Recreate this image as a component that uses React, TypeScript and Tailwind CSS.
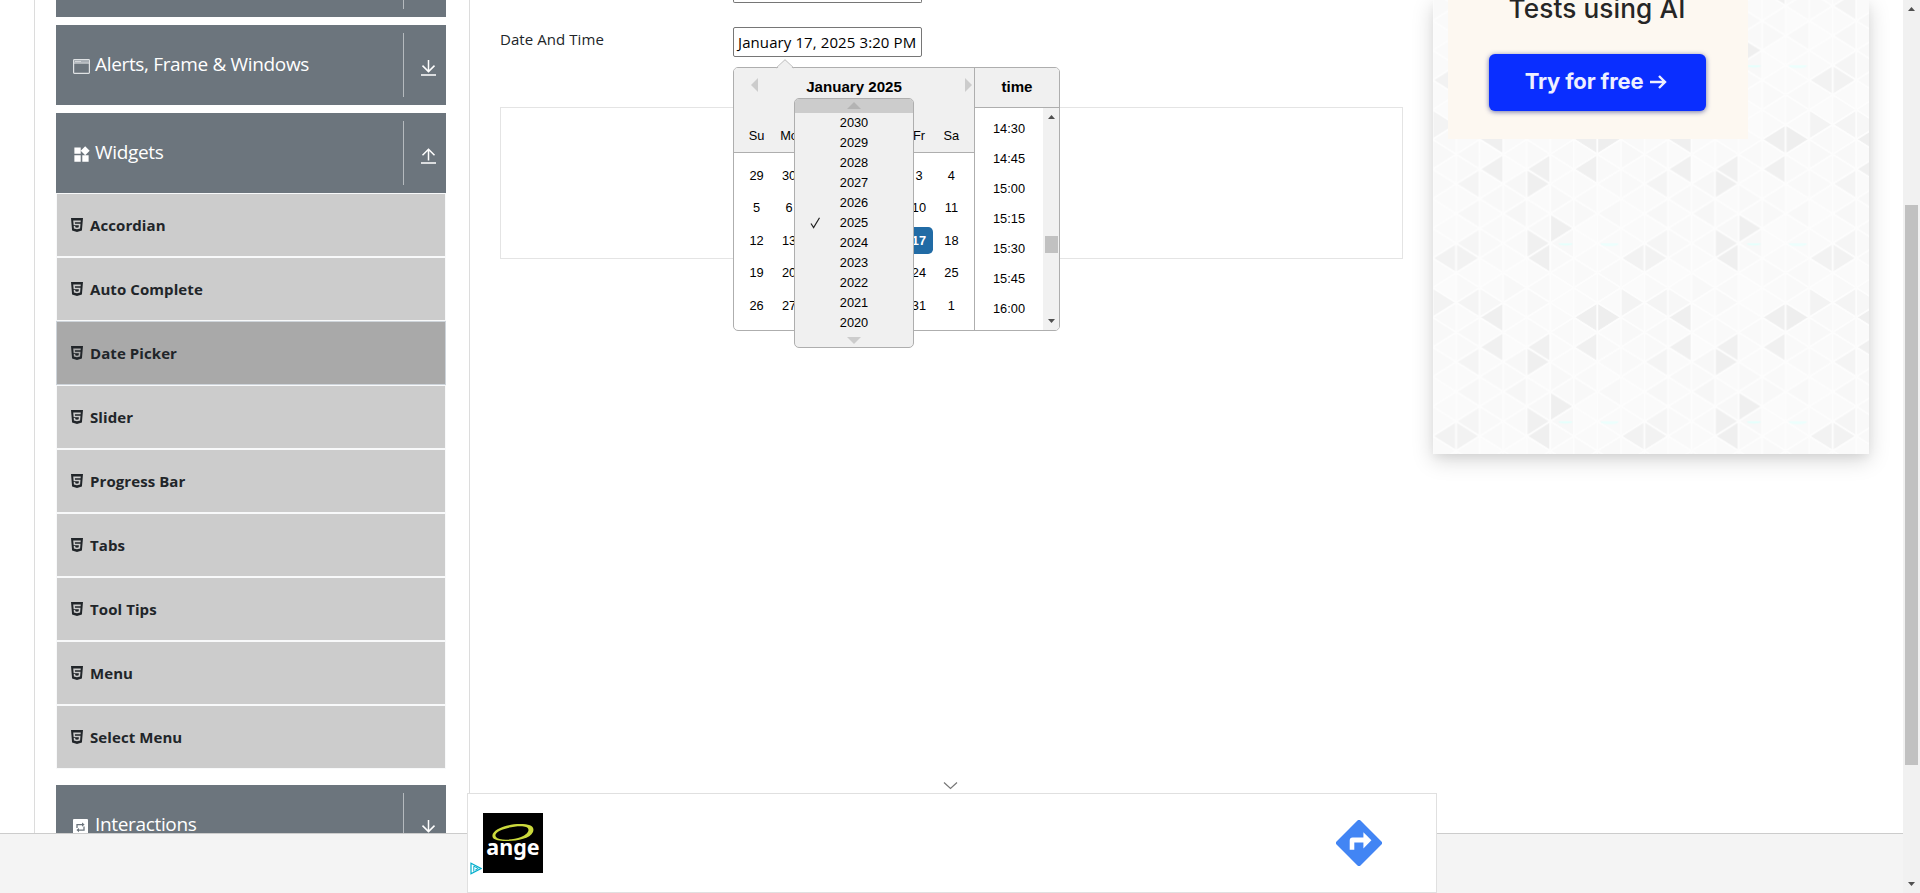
import React from "react";
import { MdWidgets } from "react-icons/md";
import { IoLogoHtml5 } from "react-icons/io5";

const menuItems = [
  "Accordian",
  "Auto Complete",
  "Date Picker",
  "Slider",
  "Progress Bar",
  "Tabs",
  "Tool Tips",
  "Menu",
  "Select Menu",
];

const dayNames = ["Su", "Mo", "Tu", "We", "Th", "Fr", "Sa"];
const weeks = [
  [29, 30, 31, 1, 2, 3, 4],
  [5, 6, 7, 8, 9, 10, 11],
  [12, 13, 14, 15, 16, 17, 18],
  [19, 20, 21, 22, 23, 24, 25],
  [26, 27, 28, 29, 30, 31, 1],
];
const years = [2030, 2029, 2028, 2027, 2026, 2025, 2024, 2023, 2022, 2021, 2020];
const times = ["14:30", "14:45", "15:00", "15:15", "15:30", "15:45", "16:00"];

// The open year list lies over these columns
const isCovered = (column: number) => column >= 2 && column <= 4;

function WindowIcon() {
  return (
    <svg width="17" height="15" viewBox="0 0 17 15" fill="none">
      <rect x="0.6" y="0.6" width="15.8" height="13.8" rx="0.8" stroke="#dfe2e4" strokeWidth="1.2" />
      <rect x="1" y="1" width="15" height="3" fill="#a9afb5" />
      <path d="M2.5 2.5h1M4.5 2.5h1M6.5 2.5h1" stroke="#fff" strokeWidth="1" />
      <path d="M1 4.2h15" stroke="#e6e8ea" strokeWidth="0.8" />
    </svg>
  );
}

function RepeatIcon() {
  return (
    <svg width="15" height="16" viewBox="0 0 15 16" fill="none">
      <rect width="15" height="16" rx="1" fill="#fff" />
      <path d="M4 9V5.600h6M11 7.500v3.600H5" stroke="#6c757d" strokeWidth="1.300" />
      <path d="M9 3.400l2.600 2.200L9 7.800zM6 9l-2.600 2.100L6 13.300z" fill="#6c757d" />
    </svg>
  );
}

function ArrowIcon({ up }: { up?: boolean }) {
  return (
    <svg width="15" height="16" viewBox="0 0 15 16" fill="none" stroke="#fff" strokeWidth="1.5">
      {up ? (
        <path d="M7.500 12.500V1.800M1.500 7.200l6-6 6 6M0 15h15" />
      ) : (
        <path d="M7.500 0v11M1.500 5.600l6 6 6-6M0 15h15" />
      )}
    </svg>
  );
}

function GroupHeader({ icon, label, up }: { icon?: React.ReactNode; label?: string; up?: boolean }) {
  return (
    <div className="flex h-20 w-full shrink-0 bg-[#6c757d] py-2 text-white">
      <div className="flex min-w-0 flex-1 items-start border-r border-[#b5babe] pl-[17px] pt-[17px]">
        <span className="mt-[9px] flex h-4 w-[22px] shrink-0 items-start">{icon}</span>
        <span className="whitespace-nowrap text-[19px] leading-[28px] tracking-[-0.34px]">{label}</span>
      </div>
      <div className="flex w-[42px] pl-[17px] pt-[27px]">
        <ArrowIcon up={up} />
      </div>
    </div>
  );
}

function Sidebar() {
  return (
    <aside className="ml-[34px] flex w-[436px] shrink-0 flex-col overflow-hidden border-x border-[#dcdcdc] pl-[21px] pr-[23px]">
      <div className="mb-2 flex h-[17px] shrink-0 flex-col justify-end overflow-hidden">
        <GroupHeader />
      </div>
      <GroupHeader icon={<WindowIcon />} label="Alerts, Frame & Windows" />
      <div className="mt-2 flex shrink-0 flex-col">
        <GroupHeader icon={<MdWidgets className="-ml-px -mt-[2px] h-[19px] w-[19px] shrink-0" />} label="Widgets" up />
      </div>
      <ul className="flex shrink-0 flex-col">
        {menuItems.map((item) => (
          <li
            key={item}
            className={
              item === "Date Picker"
                ? "flex h-16 items-center border border-[#ced4da] bg-[#a9a9a9] pl-[14px] text-[#212529]"
                : "flex h-16 items-center border border-[#f8f9fa] bg-[#ccc] pl-[14px] text-[#212529]"
            }
          >
            <IoLogoHtml5 className="-ml-[2px] -mt-px h-4 w-4" />
            <span className="ml-[5px] text-[15px] font-bold leading-6 tracking-[0.08px]">{item}</span>
          </li>
        ))}
      </ul>
      <div className="mt-4 flex shrink-0 flex-col">
        <GroupHeader icon={<RepeatIcon />} label="Interactions" />
      </div>
    </aside>
  );
}

function YearDropdown() {
  return (
    <div className="absolute left-[60px] top-[30px] flex h-[250px] w-[120px] flex-col overflow-hidden rounded-[5px] border border-[#aeaeae] bg-[#f0f0f0] text-center">
      <div className="flex h-[14px] shrink-0 justify-center bg-[#ccc] pt-[3px]">
        <svg width="14" height="7"><path d="M0 7L7 0l7 7z" fill="#b3b3b3" /></svg>
      </div>
      {years.map((y) => (
        <div key={y} className="relative h-5 shrink-0 leading-[19px]">
          {y === 2025 && (
            <svg className="absolute left-[15px] top-[4px]" width="11" height="12" fill="none" stroke="#222" strokeWidth="1.200">
              <path d="M1 6.500l2.600 4L9.500 0.800" />
            </svg>
          )}
          {y}
        </div>
      ))}
      <div className="flex h-[14px] justify-center pt-[4px]">
        <svg width="14" height="7"><path d="M0 0L7 7l7-7z" fill="#ccc" /></svg>
      </div>
    </div>
  );
}

function dayClass(day: number, column: number) {
  if (isCovered(column)) return "invisible mx-[2.65px] my-[2.65px] w-[27.2px] text-center leading-[27.2px]";
  if (day === 17)
    return "mx-[2.65px] my-[2.65px] w-[27.2px] rounded-[4.8px] bg-[#216ba5] text-center font-bold leading-[27.2px] text-white";
  return "mx-[2.65px] my-[2.65px] w-[27.2px] text-center leading-[27.2px]";
}

function DatePicker() {
  return (
    <div className="absolute left-[733px] top-[67px] z-10 flex h-[264px] w-[327px] rounded-[5px] border border-[#aeaeae] bg-white font-['Liberation_Sans',Arial,sans-serif] text-[12.8px] text-black">
      <svg className="absolute left-[42px] top-[-9px]" width="18" height="10" fill="none">
        <path d="M0.500 10L9 1l8.500 9z" fill="#f0f0f0" />
        <path d="M0 9.200L9 0.700l9 8.500" stroke="#b8b8b8" strokeWidth="1" />
      </svg>
      <div className="flex w-[241px] flex-col border-r border-[#aeaeae]">
        <div className="flex h-[85px] shrink-0 flex-col rounded-tl-[4px] border-b border-[#aeaeae] bg-[#f0f0f0]">
          <div className="flex h-[26px] justify-between pl-[17px] pr-[2px] pt-[10px]">
            <svg width="7" height="14"><path d="M7 0v14L0 7z" fill="#ccc" /></svg>
            <div className="-mt-px mr-[15px] text-[15.1px] font-bold leading-[20px]">January 2025</div>
            <svg width="7" height="14"><path d="M0 0v14l7-7z" fill="#ccc" /></svg>
          </div>
          <div className="mt-[28px] flex justify-center leading-[27px]">
            {dayNames.map((d, i) => (
              <div
                key={d}
                className={
                  isCovered(i)
                    ? "invisible mx-[2.65px] w-[27.2px] text-center"
                    : "mx-[2.65px] w-[27.2px] text-center"
                }
              >
                {d}
              </div>
            ))}
          </div>
        </div>
        <div className="flex flex-col pt-[6px]">
          {weeks.map((w, i) => (
            <div key={i} className="flex justify-center">
              {w.map((d, j) => (
                <div key={j} className={dayClass(d, j)}>{d}</div>
              ))}
            </div>
          ))}
        </div>
      </div>
      <div className="flex w-[84px] flex-col">
        <div className="h-[40px] shrink-0 rounded-tr-[4px] border-b border-[#aeaeae] bg-[#f0f0f0] pt-[9px] text-center text-[15.1px] font-bold leading-[20px]">
          time
        </div>
        <div className="flex flex-1 overflow-hidden">
          <div className="flex flex-1 flex-col pt-[6px]">
            {times.map((t) => (
              <div key={t} className="h-[30px] shrink-0 text-center leading-[29px]">{t}</div>
            ))}
          </div>
          <div className="flex w-[16px] flex-col items-center rounded-br-[4px] bg-[#f1f1f1]">
            <svg className="mt-[7px]" width="7" height="4"><path d="M0 4L3.500 0 7 4z" fill="#505050" /></svg>
            <div className="mt-[117px] h-[17px] w-[13px] bg-[#c1c1c1]" />
            <svg className="mt-[66px]" width="7" height="4"><path d="M0 0l3.500 4L7 0z" fill="#505050" /></svg>
          </div>
        </div>
      </div>
      <YearDropdown />
    </div>
  );
}

const W = 23.54;
const H = 14.835;
// Shades keyed by "column,row" of the repeating triangle mesh
const shades: Record<string, string> = {
  "0,1": "#f2f2f2", "1,1": "#f2f2f2", "1,0": "#f5f5f5", "4,0": "#f0f0f0", "4,1": "#efefef",
  "5,11": "#efefef", "0,4": "#f3f3f3", "1,4": "#f4f4f4", "2,4": "#f7f7f7", "2,5": "#efefef",
  "6,5": "#efefef", "7,5": "#eeeeee", "2,7": "#f0f0f0", "4,7": "#f0f0f0", "4,8": "#efefef",
  "6,7": "#f0f0f0", "1,8": "#f4f4f4", "3,8": "#f7f7f7", "1,10": "#f7f7f7", "3,10": "#f6f6f6",
};
const baseShades = ["#fafafa", "#f9f9f9", "#fbfbfb", "#f9f9f9", "#f8f8f8", "#fafafa", "#fafafa"];

function TrianglePattern() {
  const tris: React.ReactNode[] = [];
  for (let c = 0; c < 8; c++) {
    for (let j = -1; j <= 12; j++) {
      const jj = (j + 12) % 12;
      const left = (c + jj) % 2 === 1;
      const x0 = c * W;
      const x1 = x0 + W;
      const y = j * H;
      const pts = left
        ? `${x0},${y} ${x1},${y - H} ${x1},${y + H}`
        : `${x1},${y} ${x0},${y - H} ${x0},${y + H}`;
      const fill = shades[`${c},${jj}`] ?? baseShades[(c * 5 + jj * 3 + ((c * jj) % 4)) % 7];
      tris.push(<polygon key={`${c}:${j}`} points={pts} fill={fill} stroke="#fdfdfd" strokeWidth="1.7" />);
    }
  }
  return (
    <svg className="absolute inset-0 h-full w-full">
      <defs>
        <pattern id="mesh" width={W * 8} height={H * 12} patternUnits="userSpaceOnUse" patternTransform="translate(-0.4 65.300)">
          {tris}
          <ellipse cx="133" cy="0.8" rx="7" ry="1.500" fill="#e6fffc" />
          <ellipse cx="177" cy="0.8" rx="9" ry="2" fill="#ecfffd" />
        </pattern>
      </defs>
      <rect width="100%" height="100%" fill="url(#mesh)" />
    </svg>
  );
}

function SideAd() {
  return (
    <div className="relative ml-[30px] h-[454px] w-[436px] shrink-0 bg-[#fafafa] shadow-[0_4px_8px_0_rgba(0,0,0,0.04),0_6px_20px_0_rgba(0,0,0,0.17)]">
      <TrianglePattern />
      <div className="relative ml-[15px] flex h-[139px] w-[300px] flex-col items-center overflow-hidden bg-[#fdf8f1] pr-[2px] font-[Inter,sans-serif]">
        <div className="-mt-[9px] h-[34px] whitespace-nowrap text-[26.2px] font-medium leading-[35px] tracking-[0.1px] text-[#262626]">
          Tests using AI
        </div>
        <div className="mt-[29px] flex h-[57px] w-[217px] shrink-0 items-center justify-center rounded-[6px] bg-[#0a2eff] pb-[2px] pr-[2px] text-[22px] font-bold tracking-[-0.15px] text-[#eef0ff] shadow-[0_1px_5px_rgba(20,30,120,0.6)]">
          Try for free
          <svg className="ml-[7px]" width="17" height="16" viewBox="0 0 17 16" fill="none" stroke="#eef0ff" strokeWidth="2.400">
            <path d="M0 8h15M9 2l6 6-6 6" />
          </svg>
        </div>
      </div>
    </div>
  );
}

function BottomAd() {
  return (
    <div className="absolute left-[467px] top-[793px] z-20 flex h-[100px] w-[970px] items-start justify-between border border-[#e0e0e0] bg-white">
      <div className="flex">
        <svg className="ml-[2px] mt-[68px]" width="12" height="13" viewBox="0 0 12 13" fill="none" stroke="#00aecd" strokeWidth="1.200">
          <path d="M1 1.200v10.600L11 6.500z" />
          <path d="M3.800 9.600V4.200l4.400 2.300-3 1.600" strokeWidth="1" />
        </svg>
        <div className="ml-px mt-[19px] flex h-[60px] w-[60px] flex-col items-center overflow-hidden bg-black">
          <svg className="mt-[9px] shrink-0" width="60" height="20" viewBox="0 0 60 20">
            <path
              fillRule="evenodd"
              fill="#cbd93c"
              d="M10 16C6 9 22 2 37 2c10 0 15 2 13 8-3 7-17 9-27 9-7 0-11-1-13-3zM13 15c3 4 17 3 25 0 7-3 10-8 5-10-7-3-35 3-30 10z"
            />
          </svg>
          <div className="-mt-[8px] font-['Noto_Sans',sans-serif] text-[21.500px] font-bold leading-[26px] text-white">ange</div>
        </div>
      </div>
      <svg className="mr-[54px] mt-[26px]" width="46" height="46" viewBox="0 0 47 47">
        <path d="M21.700.8a2.500 2.500 0 0 1 3.600 0l20.900 20.900a2.500 2.500 0 0 1 0 3.600L25.300 46.200a2.500 2.500 0 0 1-3.600 0L.8 25.300a2.500 2.500 0 0 1 0-3.600z" fill="#4285f4" />
        <path d="M14 30.500V21a3 3 0 0 1 3-3h11v-5.500l8.200 8.200L28 29v-6h-9.300v7.500z" fill="#fff" />
      </svg>
    </div>
  );
}

function PageScrollbar() {
  return (
    <div className="flex w-[17px] shrink-0 flex-col items-center bg-[#f1f1f1]">
      <svg className="mt-[7px] shrink-0" width="7" height="4"><path d="M0 4L3.500 0 7 4z" fill="#505050" /></svg>
      <div className="mt-[194px] h-[560px] w-[13px] shrink-0 bg-[#c1c1c1]" />
      <svg className="mt-[117px] shrink-0" width="7" height="4"><path d="M0 0l3.500 4L7 0z" fill="#505050" /></svg>
    </div>
  );
}

export default function App() {
  return (
    <div className="relative flex h-[893px] w-full overflow-hidden bg-white font-['Open_Sans','Noto_Sans',sans-serif]">
      <div className="flex min-w-0 flex-1 flex-col">
        <div className="flex h-[833px] shrink-0 overflow-hidden">
          <Sidebar />
          <main className="ml-[30px] flex w-[903px] shrink-0 flex-col">
            <div className="ml-[233px] h-[3px] w-[189px] rounded-b-[2px] border border-t-0 border-[#767676]" />
            <div className="mt-6 flex h-[30px]">
              <label className="w-[233px] text-[15px] leading-6 tracking-[0.07px] text-[#212529]">Date And Time</label>
              <div className="h-[30px] w-[189px] whitespace-nowrap rounded-[2px] border border-[#767676] pl-[4px] text-[15px] leading-[29px] tracking-[0.100px] text-black">
                January 17, 2025 3:20 PM
              </div>
            </div>
            <div className="mt-[50px] h-[152px] border border-[#e4e4e4]" />
          </main>
          <SideAd />
        </div>
        <footer className="h-[60px] border-t border-[#ccc] bg-[#f4f4f4]" />
      </div>
      <PageScrollbar />
      <DatePicker />
      <svg className="absolute left-[943px] top-[781px]" width="15" height="9" fill="none" stroke="#777" strokeWidth="1.200">
        <path d="M1 1.500l6.500 6 6.500-6" />
      </svg>
      <BottomAd />
    </div>
  );
}
